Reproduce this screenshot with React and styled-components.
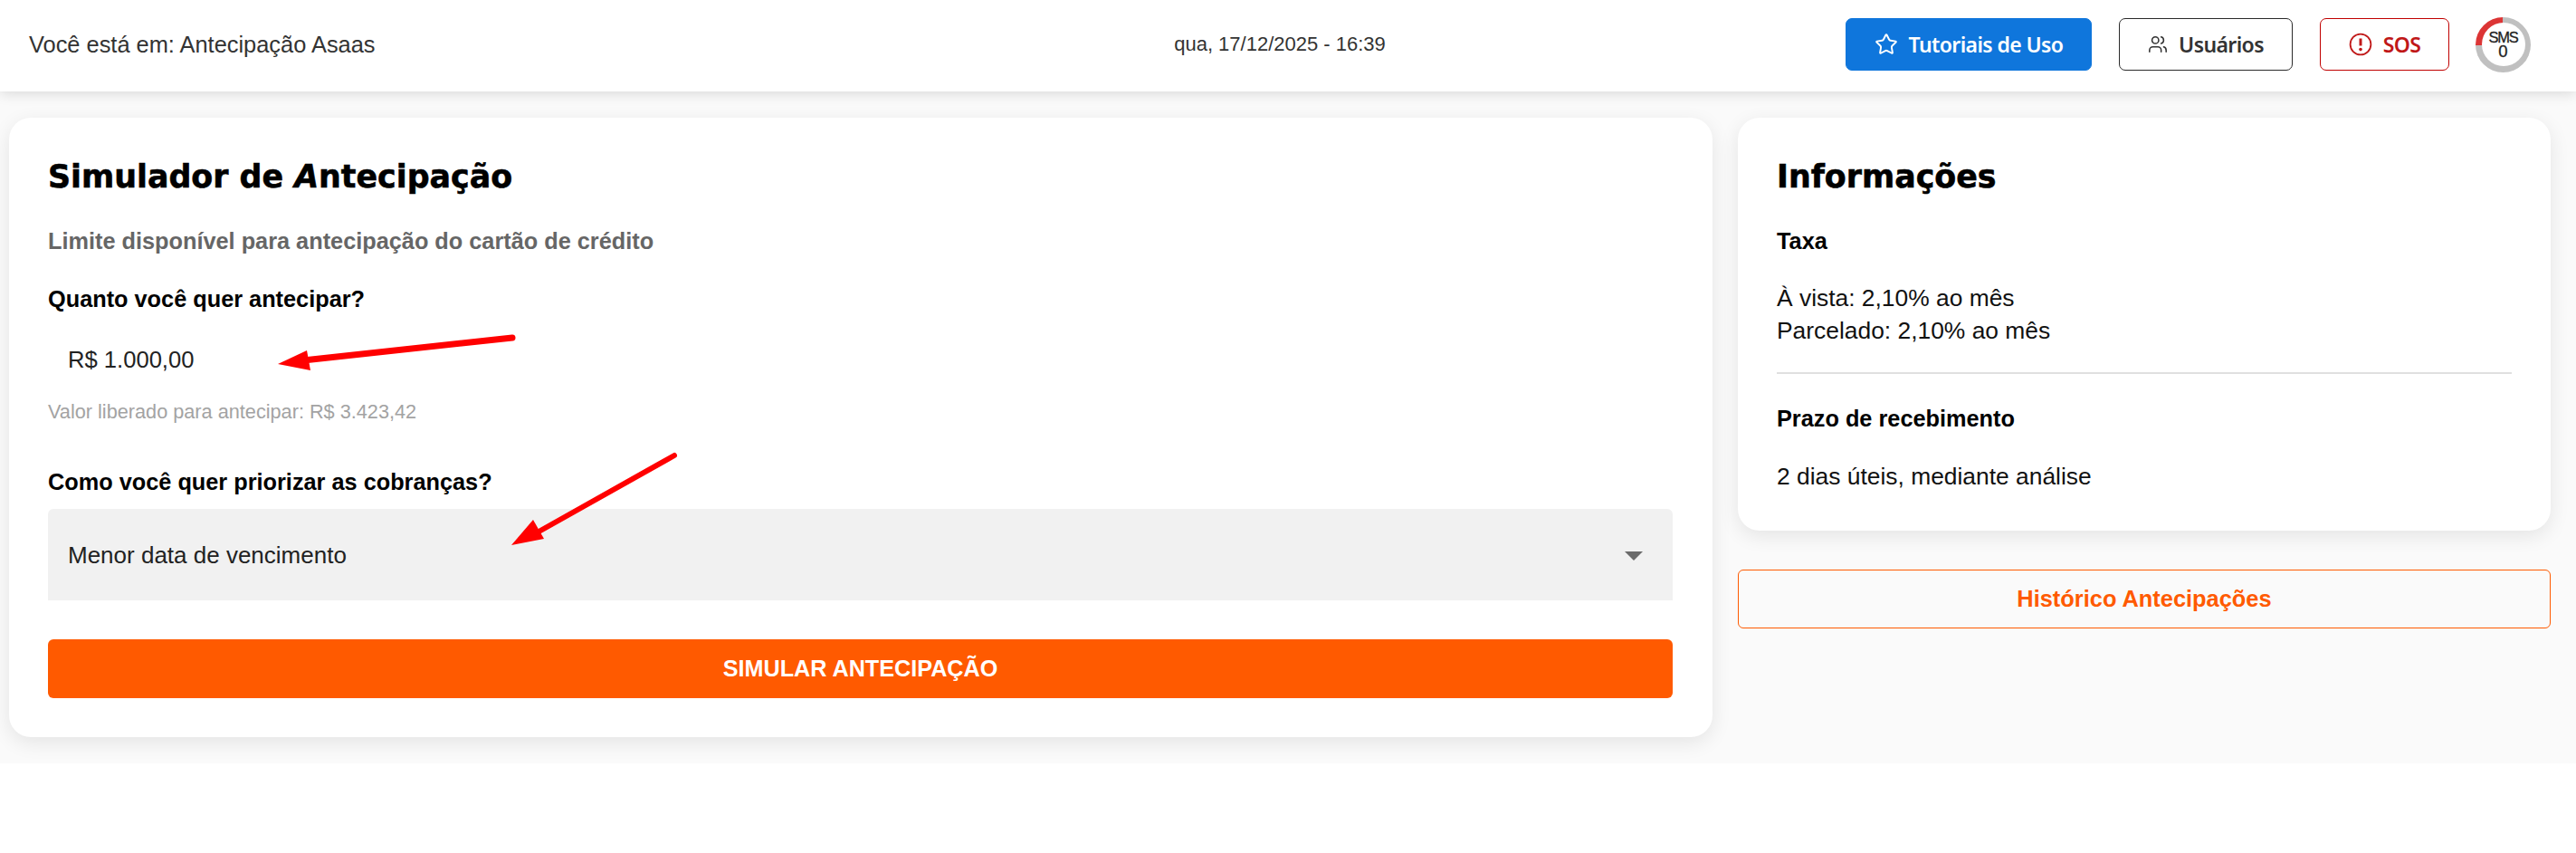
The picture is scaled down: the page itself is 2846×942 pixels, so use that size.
import React from 'react';
import styled, { createGlobalStyle } from 'styled-components';
import { Star, Users } from 'lucide-react';

const GlobalStyle = createGlobalStyle`
  html, body {
    margin: 0;
    padding: 0;
    background: #fff;
    font-family: 'Liberation Sans', Arial, sans-serif;
  }
`;

const Screen = styled.div`
  position: relative;
  width: 2846px;
`;

const Header = styled.header`
  position: relative;
  z-index: 2;
  height: 101px;
  box-sizing: border-box;
  padding: 0 50px 3px 32px;
  display: grid;
  grid-template-columns: 1fr auto 1fr;
  align-items: center;
  background: #fff;
  box-shadow: 0 2px 14px rgba(0, 0, 0, 0.14);
`;

const Breadcrumb = styled.div`
  font-size: 25.4px;
  color: #333;
`;

const DateText = styled.div`
  font-size: 22px;
  color: #333;
`;

const Actions = styled.div`
  display: flex;
  justify-content: flex-end;
  align-items: center;
  gap: 30px;
`;

const HeaderButton = styled.button`
  height: 58px;
  width: ${(p) => p.$width}px;
  box-sizing: border-box;
  display: flex;
  align-items: center;
  justify-content: center;
  gap: 12px;
  padding: 0;
  border-radius: 7px;
  border: 1px solid ${(p) => p.$border};
  background: ${(p) => p.$bg};
  color: ${(p) => p.$color};
  font-family: 'Noto Sans', sans-serif;
  font-size: 23px;
  font-weight: 600;
  letter-spacing: -0.6px;
`;

const SmsRing = styled.div`
  width: 61px;
  height: 61px;
  margin-left: -1px;
  border-radius: 50%;
  display: flex;
  align-items: center;
  justify-content: center;
  background: conic-gradient(#c0c0c0 0 270deg, #dc3535 270deg 360deg);
`;

const SmsInner = styled.div`
  width: 48px;
  height: 48px;
  border-radius: 50%;
  background: #fff;
  display: flex;
  flex-direction: column;
  align-items: center;
  justify-content: center;
  color: #222;
  font-size: 16.5px;
  line-height: 16px;
  letter-spacing: -1.2px;
  -webkit-text-stroke: 0.3px #222;
  strong {
    font-weight: 400;
    font-size: 18.5px;
    line-height: 16px;
    letter-spacing: 0;
  }
`;

const Content = styled.main`
  height: 742px;
  box-sizing: border-box;
  padding: 29px 28px 0 10px;
  display: grid;
  grid-template-columns: 1fr 898px;
  column-gap: 28px;
  align-items: start;
  background: #fafafa;
`;

const Card = styled.section`
  background: #fff;
  border-radius: 24px;
  padding: 43px ${(p) => p.$right}px ${(p) => p.$bottom}px 43px;
  box-shadow: 0 6px 22px rgba(0, 0, 0, 0.09);
`;

const Title = styled.h1`
  margin: 0;
  font-family: 'DejaVu Sans', sans-serif;
  font-size: 34.8px;
  line-height: 44px;
  font-weight: 700;
  color: #000;
  -webkit-text-stroke: 0.6px #000;
  em {
    font-style: italic;
  }
`;

const Subtitle = styled.p`
  margin: 34px 0 0;
  font-size: 25.3px;
  line-height: 30px;
  font-weight: 700;
  color: #666;
`;

const Label = styled.div`
  margin-top: ${(p) => p.$top}px;
  font-size: 25.3px;
  line-height: 30px;
  font-weight: 700;
  color: #000;
`;

const AmountField = styled.div`
  margin-top: 24px;
  height: 56px;
  padding-left: 22px;
  display: flex;
  align-items: center;
  font-size: 25.6px;
  color: #222;
`;

const Hint = styled.div`
  margin-top: 18px;
  font-size: 21.7px;
  line-height: 24px;
  color: #a3a3a3;
`;

const SelectBox = styled.div`
  margin-top: 15px;
  height: 101px;
  box-sizing: border-box;
  padding: 2px 22px 0;
  display: flex;
  align-items: center;
  justify-content: space-between;
  border-radius: 6px 6px 0 0;
  background: #f1f1f1;
  font-size: 26px;
  color: #222;
`;

const Caret = styled.span`
  width: 0;
  height: 0;
  margin: 0 11px 0 0;
  border-left: 10px solid transparent;
  border-right: 10px solid transparent;
  border-top: 10px solid #6b6b6b;
`;

const SimulateButton = styled.button`
  display: block;
  width: 100%;
  height: 65px;
  margin-top: 43px;
  border: 0;
  border-radius: 6px;
  background: #ff5a00;
  color: #fff;
  font-family: inherit;
  font-size: 25.2px;
  font-weight: 700;
`;

const SideColumn = styled.aside`
  display: flex;
  flex-direction: column;
  gap: 43px;
`;

const InfoText = styled.p`
  margin: ${(p) => p.$top}px 0 0;
  font-size: 26.4px;
  line-height: 36px;
  color: #111;
`;

const Divider = styled.hr`
  margin: 28px 0 0;
  height: 2px;
  border: 0;
  background: #e0e0e0;
`;

const HistoryButton = styled.button`
  height: 65px;
  border: 1px solid #ff5a00;
  border-radius: 6px;
  background: transparent;
  color: #ff5a00;
  font-family: inherit;
  font-size: 25.4px;
  font-weight: 700;
`;

const ArrowLayer = styled.svg`
  position: absolute;
  top: 0;
  left: 0;
  z-index: 3;
  pointer-events: none;
`;

const AlertIcon = () => (
  <svg width="26" height="26" viewBox="0 0 26 26" fill="none">
    <circle cx="13" cy="13" r="11.4" stroke="currentColor" strokeWidth="1.8" />
    <path d="M13 6.5V14.5" stroke="currentColor" strokeWidth="3" />
    <circle cx="13" cy="18.6" r="1.8" fill="currentColor" />
  </svg>
);

const App = () => (
  <Screen>
    <GlobalStyle />
    <Header>
      <Breadcrumb>Você está em: Antecipação Asaas</Breadcrumb>
      <DateText>qua, 17/12/2025 - 16:39</DateText>
      <Actions>
        <HeaderButton $width={272} $bg="#0f76dc" $border="#0f76dc" $color="#fff">
          <Star size={26} strokeWidth={1.8} />
          Tutoriais de Uso
        </HeaderButton>
        <HeaderButton $width={192} $bg="#fff" $border="#2a2a2a" $color="#333">
          <Users size={22} strokeWidth={1.7} />
          Usuários
        </HeaderButton>
        <HeaderButton $width={143} $bg="#fff" $border="#c00000" $color="#c01818">
          <AlertIcon />
          SOS
        </HeaderButton>
        <SmsRing>
          <SmsInner>
            SMS
            <strong>0</strong>
          </SmsInner>
        </SmsRing>
      </Actions>
    </Header>
    <Content>
      <Card $right={44} $bottom={43}>
        <Title>
          Simulador de <em>A</em>ntecipação
        </Title>
        <Subtitle>Limite disponível para antecipação do cartão de crédito</Subtitle>
        <Label $top={34}>Quanto você quer antecipar?</Label>
        <AmountField>R$ 1.000,00</AmountField>
        <Hint>Valor liberado para antecipar: R$ 3.423,42</Hint>
        <Label $top={50}>Como você quer priorizar as cobranças?</Label>
        <SelectBox>
          Menor data de vencimento
          <Caret />
        </SelectBox>
        <SimulateButton>SIMULAR ANTECIPAÇÃO</SimulateButton>
      </Card>
      <SideColumn>
        <Card $right={43} $bottom={42}>
          <Title>Informações</Title>
          <Label $top={34}>Taxa</Label>
          <InfoText $top={30}>
            À vista: 2,10% ao mês
            <br />
            Parcelado: 2,10% ao mês
          </InfoText>
          <Divider />
          <Label $top={34}>Prazo de recebimento</Label>
          <InfoText $top={31}>2 dias úteis, mediante análise</InfoText>
        </Card>
        <HistoryButton>Histórico Antecipações</HistoryButton>
      </SideColumn>
    </Content>
    {/* annotation arrows drawn over the screenshot */}
    <ArrowLayer width="2846" height="843" viewBox="0 0 2846 843">
      <path d="M566 373L335 398" stroke="#f00" strokeWidth="7" strokeLinecap="round" fill="none" />
      <path d="M307 402L339 387L343 409Z" fill="#f00" />
      <path d="M745 503L590 590" stroke="#f00" strokeWidth="6" strokeLinecap="round" fill="none" />
      <path d="M565 602L589 574L601 595Z" fill="#f00" />
    </ArrowLayer>
  </Screen>
);

export default App;
